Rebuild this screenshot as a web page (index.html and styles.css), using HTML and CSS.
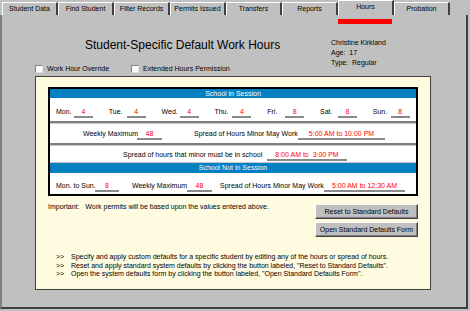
FILE: index.html
```html
<!DOCTYPE html>
<html lang="en">
<head>
    <meta charset="UTF-8">
    <title>Hours</title>
    <link rel="stylesheet" href="styles.css">
</head>
<body>
    <nav class="tabs">
        <div class="tab">Student Data</div>
        <div class="tab">Find Student</div>
        <div class="tab">Filter Records</div>
        <div class="tab">Permits Issued</div>
        <div class="tab">Transfers</div>
        <div class="tab">Reports</div>
        <div class="tab active">Hours</div>
        <div class="tab">Probation</div>
    </nav>

    <div class="frame">
        <div class="top">
            <div class="top-left">
                <h1 class="title">Student-Specific Default Work Hours</h1>
                <div class="checks">
                    <label class="check check-first"><span class="box"></span>Work Hour Override</label>
                    <label class="check"><span class="box"></span>Extended Hours Permission</label>
                </div>
            </div>
            <div class="info">
                <div>Christine Kirkland</div>
                <div>Age:&nbsp; 17</div>
                <div>Type:&nbsp; Regular</div>
            </div>
        </div>

        <div class="panel">
            <div class="sched">
                <div class="band band-1">School in Session</div>
                <div class="row row-days">
                    <div class="day"><span class="lbl">Mon.</span><span class="val">4</span></div>
                    <div class="day"><span class="lbl">Tue.</span><span class="val">4</span></div>
                    <div class="day"><span class="lbl">Wed.</span><span class="val">4</span></div>
                    <div class="day"><span class="lbl">Thu.</span><span class="val">4</span></div>
                    <div class="day"><span class="lbl">Fri.</span><span class="val">8</span></div>
                    <div class="day"><span class="lbl">Sat.</span><span class="val">8</span></div>
                    <div class="day"><span class="lbl">Sun.</span><span class="val">8</span></div>
                </div>
                <div class="sep"></div>
                <div class="row row-week">
                    <span class="lbl w-max">Weekly Maximum</span><span class="val v-max">48</span>
                    <span class="lbl w-spread">Spread of Hours Minor May Work</span><span class="val v-spread">5:00 AM to 10:00 PM</span>
                </div>
                <div class="sep"></div>
                <div class="row row-school">
                    <span class="lbl w-school">Spread of hours that minor must be in school</span><span class="val v-school">8:00 AM to&nbsp; 3:00 PM</span>
                </div>
                <div class="thin"></div>
                <div class="band band-2">School Not in Session</div>
                <div class="row row-off">
                    <span class="lbl w-all">Mon. to Sun.</span><span class="val v-all">8</span>
                    <span class="lbl w-max2">Weekly Maximum</span><span class="val v-max">48</span>
                    <span class="lbl w-spread">Spread of Hours Minor May Work</span><span class="val v-spread2">5:00 AM to 12:30 AM</span>
                </div>
            </div>

            <div class="below">
                <p class="important">Important:&nbsp;&nbsp; Work permits will be based upon the values entered above.</p>
                <div class="buttons">
                    <button class="btn">Reset to Standard Defaults</button>
                    <button class="btn">Open Standard Defaults Form</button>
                </div>
            </div>

            <ul class="notes">
                <li><span class="mark">&gt;&gt;</span>Specify and apply custom defaults for a specific student by editing any of the hours or spread of hours.</li>
                <li><span class="mark">&gt;&gt;</span>Reset and apply standard system defaults by clicking the button labeled, "Reset to Standard Defaults".</li>
                <li><span class="mark">&gt;&gt;</span>Open the system defaults form by clicking the button labeled, "Open Standard Defaults Form".</li>
            </ul>
        </div>
    </div>
</body>
</html>
```

FILE: styles.css
```css
* {
    margin: 0;
    padding: 0;
    box-sizing: border-box;
}

body {
    width: 470px;
    height: 311px;
    overflow: hidden;
    background: #c0c0c0;
    color: #000;
    font-family: "Liberation Sans", Arial, sans-serif;
    font-size: 7px;
}

/* tab strip */
.tabs {
    display: flex;
    height: 15px;
    padding-left: 2px;
}

.tab {
    position: relative;
    width: 56px;
    height: 13px;
    margin-top: 2px;
    border-top: 1px solid #fff;
    border-left: 1px solid #fff;
    border-right: 2px solid #404040;
    text-align: center;
    line-height: 12px;
}

.tab.active {
    height: 15px;
    margin-top: 0;
    line-height: 12px;
}

.tab.active::after {
    content: '';
    position: absolute;
    left: -1px;
    right: 0;
    top: 18px;
    height: 5px;
    background: #ff0000;
}

.frame {
    width: 468px;
    height: 294px;
    border-left: 2px solid #808080;
    border-right: 2px solid #404040;
    border-bottom: 2px solid #404040;
}

/* heading area */
.top {
    display: flex;
    padding: 23px 0 0 33px;
}

.top-left {
    width: 296px;
}

.title {
    font-size: 12px;
    font-weight: normal;
    line-height: 14px;
    padding-left: 50px;
}

.checks {
    display: flex;
    margin-top: 13px;
    height: 8px;
}

.check {
    display: flex;
    align-items: center;
    gap: 4px;
    line-height: 8px;
}

.check-first {
    width: 96px;
}

.box {
    width: 8px;
    height: 8px;
    background: #fff;
    border-top: 1px solid #808080;
    border-left: 1px solid #808080;
    border-right: 1px solid #e0e0e0;
    border-bottom: 1px solid #e0e0e0;
}

.info {
    line-height: 10px;
}

/* cream panel */
.panel {
    width: 396px;
    height: 214px;
    margin: 3px 0 0 33px;
    padding: 10px 0 0 12px;
    border: 1px solid #404040;
    background: #fffbe1;
}

.sched {
    width: 370px;
    border: 2px solid #000;
    background: #fff;
}

.band {
    background: #0080c0;
    color: #fff;
    text-align: center;
    height: 9px;
    line-height: 9px;
}

.band-2 {
    height: 10px;
    line-height: 10px;
}

.row {
    display: flex;
    line-height: 9px;
    white-space: nowrap;
}

.sep {
    height: 3px;
    background: #808080;
    border-bottom: 1px solid #c8c8c8;
}

.thin {
    height: 1px;
    background: #c8c8c8;
}

.lbl {
    display: block;
}

.val {
    display: block;
    height: 11px;
    border-bottom: 2px solid #8a8a8a;
    color: #ff0000;
    text-align: center;
}

.row-days {
    display: grid;
    grid-template-columns: repeat(7, 52.8px);
    height: 23px;
    padding: 9px 0 0 6px;
}

.day {
    display: flex;
}

.day .lbl {
    width: 18px;
}

.day .val {
    width: 19px;
}

.row-week {
    height: 19px;
    padding: 5px 0 0 33px;
}

.w-max {
    width: 54px;
}

.v-max {
    width: 25px;
}

.w-spread {
    width: 104px;
    margin-left: 32px;
}

.v-spread {
    width: 87px;
}

.row-school {
    height: 16px;
    padding: 4px 0 0 73px;
}

.w-school {
    width: 144px;
}

.v-school {
    width: 80px;
}

.row-off {
    height: 21px;
    padding: 8px 0 0 6px;
}

.w-all {
    width: 39px;
}

.v-all {
    width: 24px;
}

.w-max2 {
    width: 55px;
    margin-left: 13px;
}

.row-off .w-spread {
    margin-left: 8px;
}

.v-spread2 {
    width: 81px;
}

/* message and buttons */
.below {
    display: flex;
    justify-content: space-between;
    width: 370px;
    margin-top: 8px;
}

.important {
    line-height: 8px;
    margin-top: -1px;
}

.buttons {
    display: flex;
    flex-direction: column;
    gap: 3px;
}

.btn {
    width: 103px;
    height: 15px;
    background: #c0c0c0;
    border: 1px solid;
    border-color: #fff #404040 #404040 #fff;
    box-shadow: inset -1px -1px #808080;
    font-family: inherit;
    font-size: 7px;
    line-height: 12px;
    color: #000;
}

.notes {
    list-style: none;
    margin-top: 16px;
    padding-left: 8px;
    line-height: 8.5px;
}

.mark {
    display: inline-block;
    width: 15px;
}
```
